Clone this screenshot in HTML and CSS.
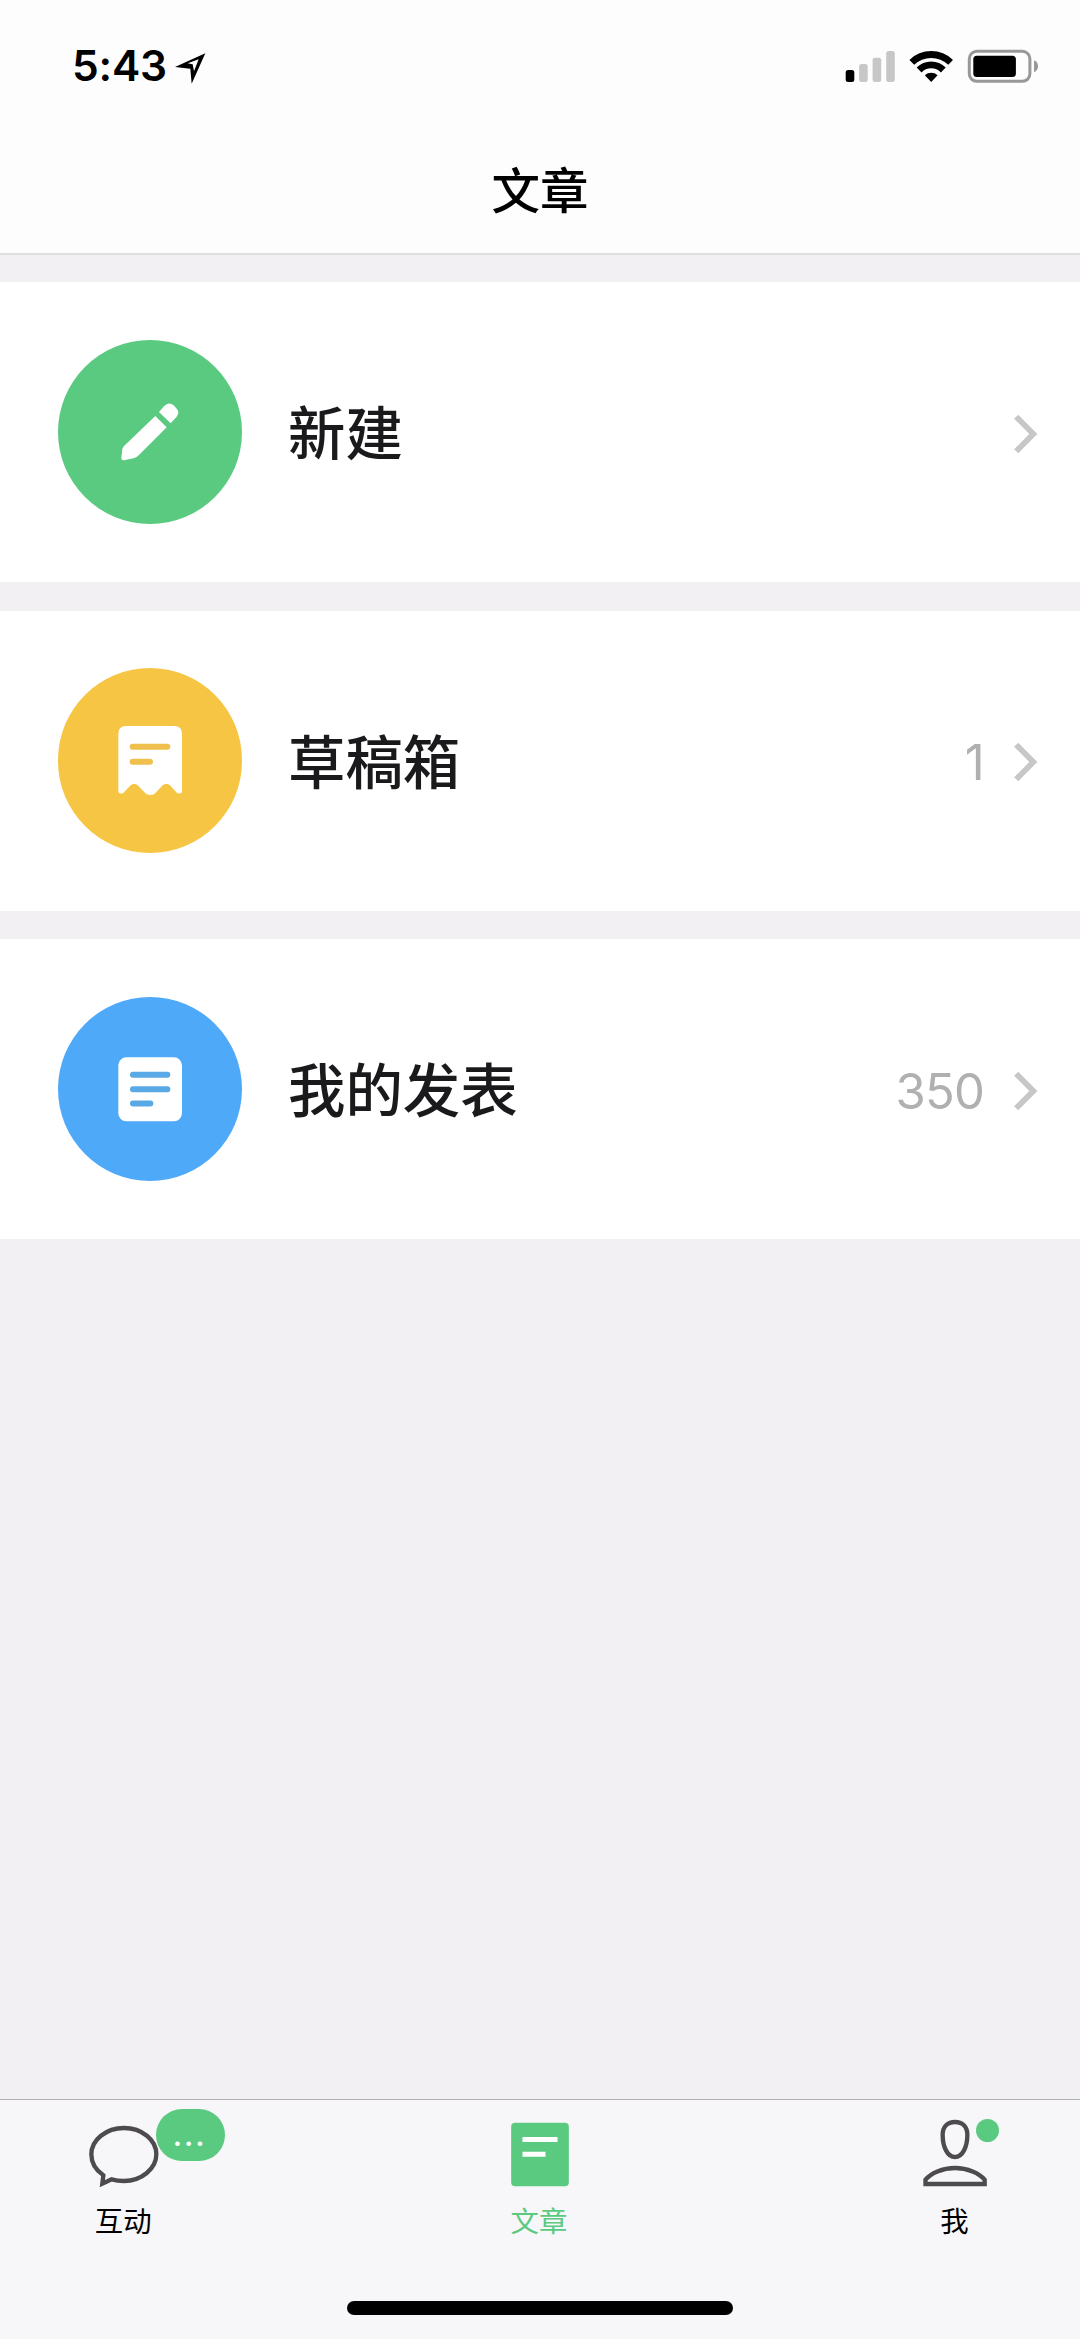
FILE: index.html
```html
<!DOCTYPE html>
<html lang="zh-CN">
<head>
<meta charset="utf-8">
<title>文章</title>
<link rel="stylesheet" href="styles.css">
</head>
<body>
<div class="screen">
  <header class="header">
    <div class="status-bar">
      <div class="status-left">
        <span class="time">5:43</span>
        <svg class="location" viewBox="378 70 93 93"><path d="M378 112 469 71 428 162 424 117Z"/><path fill="#fff" d="M416 101 449 89 435 125 431 104Z"/></svg>
      </div>
      <svg class="status-icons" viewBox="844 48 196 36">
        <rect x="845.7" y="70" width="8.6" height="12" rx="2.5"/>
        <g fill="#c7c7c7">
          <rect x="859.1" y="64" width="8.6" height="18" rx="2.5"/>
          <rect x="872.6" y="57.7" width="8.6" height="24.3" rx="2.5"/>
          <rect x="886.2" y="51" width="8.6" height="31" rx="2.5"/>
        </g>
        <path d="M931.2 82 924.8 75.3A9.5 9.5 0 0 1 937.6 75.3Z"/>
        <g fill="none" stroke="#000" stroke-width="6.8">
          <path d="M919.1 70A17 17 0 0 1 943.3 70"/>
          <path d="M911.8 62.4A27.8 27.8 0 0 1 950.6 62.4"/>
        </g>
        <rect x="969.3" y="51.3" width="60.6" height="30" rx="7.5" fill="none" stroke="#989898" stroke-width="3"/>
        <rect x="973.3" y="55.7" width="42.6" height="21.3" rx="3.5"/>
        <path fill="#989898" d="M1034 60.3Q1038 62 1038 66.2T1034 72.1Z"/>
      </svg>
    </div>
    <h1 class="title">文章</h1>
  </header>

  <main class="list">
    <a class="row">
      <svg class="badge-icon green" viewBox="53 59 553 553">
        <path d="M345 287 379 321 296 404Q289 411 280 414L251 420Q243 421 243 413L246 387Q247 381 252 376Z"/>
        <path d="M356 275 371 258Q385 242 400 255L408 264Q420 276 409 289L391 309Z"/>
      </svg>
      <span class="label">新建</span>
      <svg class="chevron" viewBox="0 0 24 40"><path d="M2.2 2.7 19.3 20 2.2 37.3"/></svg>
    </a>
    <a class="row">
      <svg class="badge-icon yellow" viewBox="53 54 553 553">
        <path d="M234 251Q234 228 257 228H402Q425 228 425 251V426Q422 433 411 430L389 406Q378 396 367 406L343 431Q330 439 317 431L292 406Q282 396 271 406L248 430Q238 433 234 426Z"/>
        <path class="line" d="M277 290.500H381M277 335H329"/>
      </svg>
      <span class="label">草稿箱</span>
      <span class="count">1</span>
      <svg class="chevron" viewBox="0 0 24 40"><path d="M2.2 2.7 19.3 20 2.2 37.3"/></svg>
    </a>
    <a class="row">
      <svg class="badge-icon blue" viewBox="53 50 553 553">
        <rect x="234" y="231" width="191" height="192" rx="24"/>
        <path class="line" d="M278 283.500H381M278 326.500H381M278 369.500H330"/>
      </svg>
      <span class="label">我的发表</span>
      <span class="count">350</span>
      <svg class="chevron" viewBox="0 0 24 40"><path d="M2.2 2.7 19.3 20 2.2 37.3"/></svg>
    </a>
  </main>

  <footer class="footer">
    <nav class="tabs">
      <a class="tab">
        <svg class="tab-icon" viewBox="84 90 216 240"><path class="outline" d="M130 286C108 271 94 249 94 223C94 180 138 144 192 144S289 180 289 223S245 303 192 303Q172 303 155 298L127 311Z"/></svg>
        <span class="tab-label">互动</span>
        <span class="bubble">...</span>
      </a>
      <a class="tab active">
        <svg class="tab-icon" viewBox="130.500 90 216 240"><rect x="152" y="128" width="173" height="191" rx="12" fill="#5bca81"/><path fill="#fff" d="M186 171H291V186H186ZM186 215H255V230H186Z"/></svg>
        <span class="tab-label">文章</span>
      </a>
      <a class="tab">
        <svg class="tab-icon" viewBox="118 90 216 240"><path class="outline" d="M226 126C248 126 263 140 263 165C263 200 249 231 226 231S189 200 189 165C189 140 204 126 226 126ZM137.500 312V299C153 280 188 264 226 264S299 280 315 299V312Z"/></svg>
        <span class="tab-label">我</span>
        <span class="dot"></span>
      </a>
    </nav>
    <div class="home-indicator"></div>
  </footer>
</div>
</body>
</html>
```
FILE: styles.css
```css
* { box-sizing: border-box; }

body {
  margin: 0;
  font-family: "Noto Sans CJK SC", sans-serif;
  color: #000;
}

.screen {
  display: flex;
  flex-direction: column;
  height: 2339px;
  background: #f2f0f2;
}

.header {
  height: 254.500px;
  background: #fdfdfd;
  border-bottom: 2px solid #dfdfdf;
}

.status-bar {
  display: flex;
  justify-content: space-between;
  align-items: center;
  height: 132px;
  padding: 0 40px 0 72px;
}

.status-left { display: flex; align-items: center; gap: 8px; }

.time {
  font: 600 42.500px/1 Inter, sans-serif;
  letter-spacing: -0.2px;
}

.location { width: 31px; height: 31px; margin-top: 5px; }
.status-icons { width: 196px; height: 36px; }

.title {
  margin: 0;
  text-align: center;
  font-size: 48.500px;
  font-weight: 500;
  line-height: 113px;
}

.list {
  display: flex;
  flex: 1;
  flex-direction: column;
  gap: 28.500px;
  padding-top: 27.500px;
}

.row {
  display: flex;
  align-items: center;
  height: 300px;
  padding: 0 42px 0 57.700px;
  background: #fff;
}

.badge-icon {
  width: 184.300px;
  height: 184.300px;
  border-radius: 50%;
  fill: #fff;
}

.green { background: #5bca81; }
.yellow { background: #f5c543; }
.blue { background: #4fa9f9; }

.line { fill: none; stroke-width: 18; stroke-linecap: round; }
.yellow .line { stroke: #f0c04e; }
.blue .line { stroke: #58a9e6; }

.label {
  flex: 1;
  margin: 0 0 2px 46px;
  color: #1a1a1c;
  font-size: 57.400px;
  font-weight: 500;
  line-height: 1;
}

.count {
  margin: 4px 30px 0 0;
  color: #b0b0b0;
  font: 400 49px/1 Inter, sans-serif;
  letter-spacing: -0.8px;
}

.chevron {
  width: 24px;
  height: 40px;
  margin-top: 3px;
  fill: none;
  stroke: #c7c7c8;
  stroke-width: 5.8;
}

.footer {
  height: 240.500px;
  background: #f7f6f8;
  border-top: 1.500px solid #b2b0b4;
}

.tabs {
  display: flex;
  justify-content: space-between;
  height: 201px;
  padding: 10px 24.700px 0 24px;
}

.tab {
  position: relative;
  display: flex;
  flex-direction: column;
  align-items: center;
  width: 200px;
  font-size: 28.400px;
  line-height: 42px;
}

.tab-icon { width: 72px; height: 80px; margin-bottom: 9px; }
.tab-label { margin-right: 1.500px; }
.outline { fill: none; stroke: #4d4b4f; stroke-width: 13; }
.active { color: #5bca81; }

.bubble {
  position: absolute;
  top: -1px;
  left: 131.700px;
  width: 69.300px;
  height: 52px;
  padding-right: 2px;
  border-radius: 26px;
  background: #5bca81;
  color: #fff;
  font: 400 34px/50px Inter, sans-serif;
  letter-spacing: 1.500px;
  text-align: center;
}

.dot {
  position: absolute;
  top: 9px;
  left: 120.400px;
  width: 23px;
  height: 23px;
  border-radius: 50%;
  background: #5bca81;
}

.home-indicator {
  width: 386px;
  height: 14.500px;
  margin: 0 auto;
  border-radius: 8px;
  background: #000;
}
```
